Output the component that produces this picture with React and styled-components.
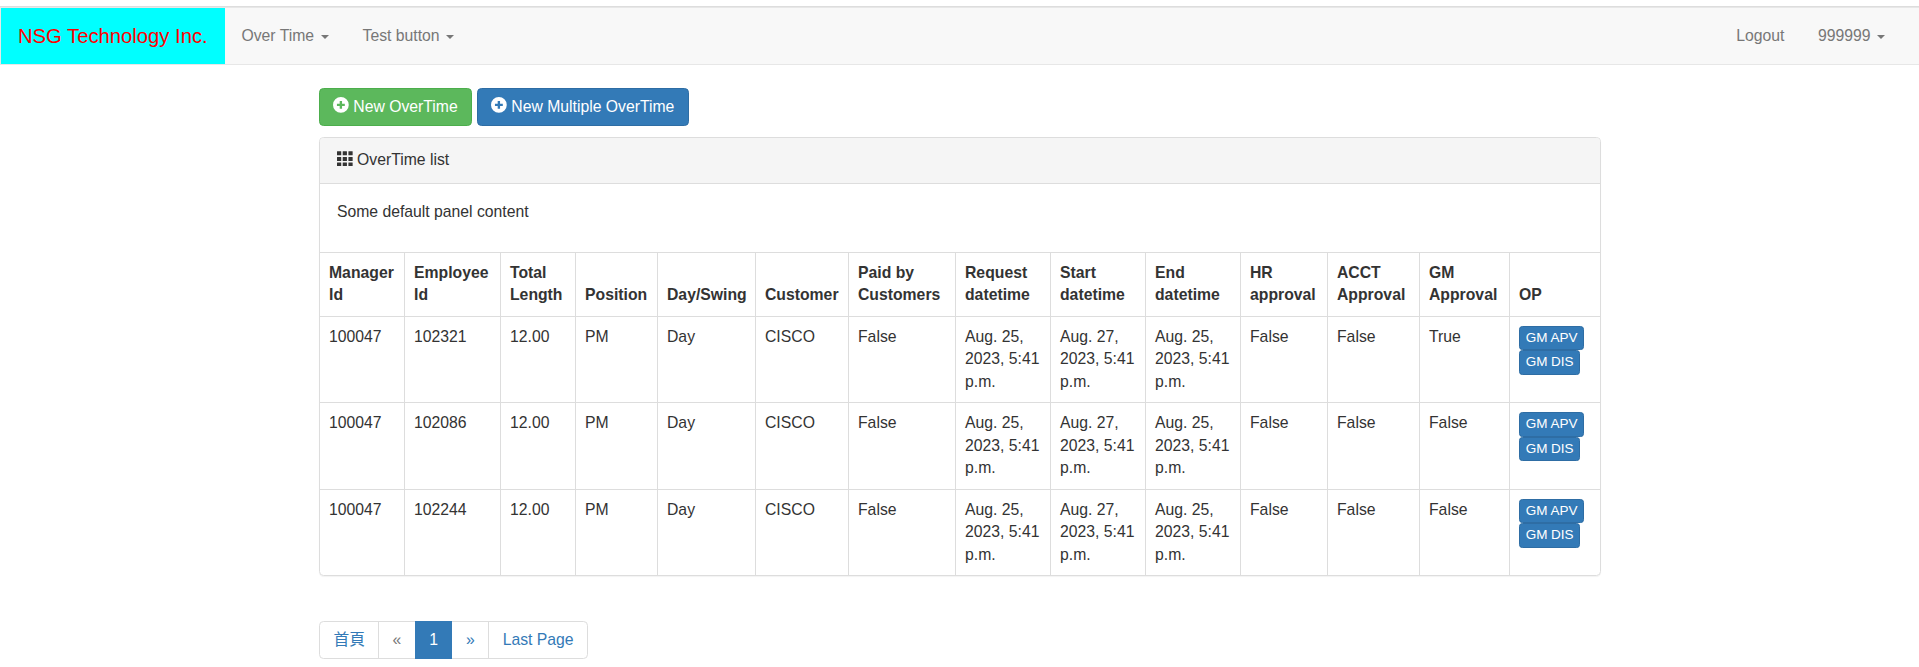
import React from "react";
import styled, { createGlobalStyle, css } from "styled-components";

const GlobalStyle = createGlobalStyle`
  *, *::before, *::after { box-sizing: border-box; }
  body {
    margin: 0;
    background: #fff;
    color: #333;
    font-family: "Liberation Sans", Arial, "Noto Sans CJK TC", sans-serif;
    font-size: 15.75px;
    line-height: 22.5px;
  }
  a { color: #337ab7; text-decoration: none; }
`;

const TopRule = styled.div`
  height: 7px;
  border-bottom: 1px solid #ddd;
`;

const Navbar = styled.nav`
  display: flex;
  height: 58px;
  padding-right: 16.875px;
  background: #f8f8f8;
  border: 1px solid #e7e7e7;
  border-right: 0;
  margin-bottom: 23px;
`;

const Brand = styled.a`
  padding: 16.875px;
  font-size: 20.25px;
  && { color: #f00; }
  background: #0ff;
`;

const NavList = styled.div`
  display: flex;
  margin-left: ${(p) => (p.$right ? "auto" : 0)};
`;

const NavLink = styled.a`
  padding: 16.875px;
  && { color: #777; }
`;

const Caret = styled.span`
  display: inline-block;
  margin-left: 2.25px;
  vertical-align: middle;
  border-top: 4px solid;
  border-right: 4px solid transparent;
  border-left: 4px solid transparent;
`;

const Container = styled.main`
  width: 1282px;
  margin: 0 auto 0 319px;
`;

const Actions = styled.div`
  display: flex;
  gap: 5px;
  margin-bottom: 11px;
`;

const tones = {
  success: ["#5cb85c", "#4cae4c"],
  primary: ["#337ab7", "#2e6da4"],
};

const Button = styled.button`
  display: inline-block;
  margin: 0;
  padding: 6.75px 13.2px;
  border: 1px solid ${(p) => tones[p.$tone][1]};
  border-radius: 4.5px;
  background: ${(p) => tones[p.$tone][0]};
  color: #fff;
  font: inherit;
  white-space: nowrap;
  vertical-align: middle;
  ${(p) =>
    p.$small &&
    css`
      padding: 1.125px 5.625px;
      font-size: 13.5px;
      line-height: 20.25px;
      border-radius: 3.375px;
    `}
`;

const Glyph = styled.svg`
  display: inline-block;
  position: relative;
  top: 1px;
  width: 15.75px;
  height: 15.75px;
  fill: currentColor;
`;

const Panel = styled.section`
  border: 1px solid #ddd;
  border-radius: 4.5px;
  box-shadow: 0 1px 1px rgba(0, 0, 0, 0.05);
  overflow: hidden;
`;

const PanelHeading = styled.header`
  padding: 11.25px 16.875px;
  background: #f5f5f5;
  border-bottom: 1px solid #ddd;
`;

const PanelBody = styled.div`
  padding: 16.875px;
  p { margin: 0 0 11.25px; }
`;

const Table = styled.table`
  width: 100%;
  table-layout: fixed;
  border-collapse: separate;
  border-spacing: 0;
`;

const cell = css`
  padding: 9px 0 9px 9px;
  border-top: 1px solid #ddd;
  border-left: 1px solid #ddd;
  text-align: left;
  &:first-child { border-left: 0; }
`;

const Th = styled.th`
  ${cell}
  vertical-align: bottom;
`;

const Td = styled.td`
  ${cell}
  vertical-align: top;
`;

const Pagination = styled.nav`
  display: flex;
  margin-top: 45px;
`;

const PageLink = styled.a`
  padding: 6.75px 13.5px;
  border: 1px solid #ddd;
  margin-left: -1px;
  &:first-child { margin-left: 0; padding-right: 12.9px; border-radius: 4.5px 0 0 4.5px; }
  &:last-child { border-radius: 0 4.5px 4.5px 0; }
  ${(p) => p.$disabled && css`&& { color: #777; }`}
  ${(p) =>
    p.$active &&
    css`
      && { color: #fff; }
      z-index: 1;
      background: #337ab7;
      border-color: #337ab7;
    `}
`;

const PlusGlyph = () => (
  <Glyph viewBox="0 0 16 16">
    <path fillRule="evenodd" d="M8 0a8 8 0 1 0 0 16a8 8 0 1 0 0-16zM6.8 4h2.4v2.8H12v2.4H9.200V12H6.800V9.200H4V6.800h2.800z" />
  </Glyph>
);

const GridGlyph = () => (
  <Glyph viewBox="0 0 16 16">
    {[0.2, 6, 11.6].map((y) =>
      [0, 5.8, 11.6].map((x) => <rect key={`${x}-${y}`} x={x} y={y} width="4.3" height="4.2" rx="0.3" />)
    )}
  </Glyph>
);

const columns = [
  ["Manager", "Id", 84],
  ["Employee", "Id", 96],
  ["Total", "Length", 75],
  ["Position", "", 82],
  ["Day/Swing", "", 98],
  ["Customer", "", 93],
  ["Paid by", "Customers", 107],
  ["Request", "datetime", 95],
  ["Start", "datetime", 95],
  ["End", "datetime", 95],
  ["HR", "approval", 87],
  ["ACCT", "Approval", 92],
  ["GM", "Approval", 90],
  ["OP", "", null],
];

const at = (day) => `Aug. ${day}, 2023, 5:41 p.m.`;
const rows = [
  ["102321", "True"],
  ["102086", "False"],
  ["102244", "False"],
].map(([employee, gm]) => [
  "100047", employee, "12.00", "PM", "Day", "CISCO", "False",
  at(25), at(27), at(25), "False", "False", gm,
]);

export default function App() {
  return (
    <>
      <GlobalStyle />
      <TopRule />
      <Navbar>
        <Brand href="#">NSG Technology Inc.</Brand>
        <NavList>
          <NavLink href="#">Over Time <Caret /></NavLink>
          <NavLink href="#">Test button <Caret /></NavLink>
        </NavList>
        <NavList $right>
          <NavLink href="#">Logout</NavLink>
          <NavLink href="#">999999 <Caret /></NavLink>
        </NavList>
      </Navbar>
      <Container>
        <Actions>
          <Button $tone="success"><PlusGlyph /> New OverTime</Button>
          <Button $tone="primary"><PlusGlyph /> New Multiple OverTime</Button>
        </Actions>
        <Panel>
          <PanelHeading><GridGlyph /> OverTime list</PanelHeading>
          <PanelBody><p>Some default panel content</p></PanelBody>
          <Table>
            <colgroup>
              {columns.map(([a, b, w]) => <col key={a + b} width={w ?? undefined} />)}
            </colgroup>
            <thead>
              <tr>
                {columns.map(([a, b]) => <Th key={a + b}>{a}{b && <><br />{b}</>}</Th>)}
              </tr>
            </thead>
            <tbody>
              {rows.map((row) => (
                <tr key={row[1]}>
                  {row.map((value, i) => <Td key={i}>{value}</Td>)}
                  <Td>
                    <Button $tone="primary" $small>GM APV</Button>{" "}
                    <Button $tone="primary" $small>GM DIS</Button>
                  </Td>
                </tr>
              ))}
            </tbody>
          </Table>
        </Panel>
        <Pagination>
          <PageLink href="#">首頁</PageLink>
          <PageLink href="#" $disabled>«</PageLink>
          <PageLink href="#" $active>1</PageLink>
          <PageLink href="#">»</PageLink>
          <PageLink href="#">Last Page</PageLink>
        </Pagination>
      </Container>
    </>
  );
}
